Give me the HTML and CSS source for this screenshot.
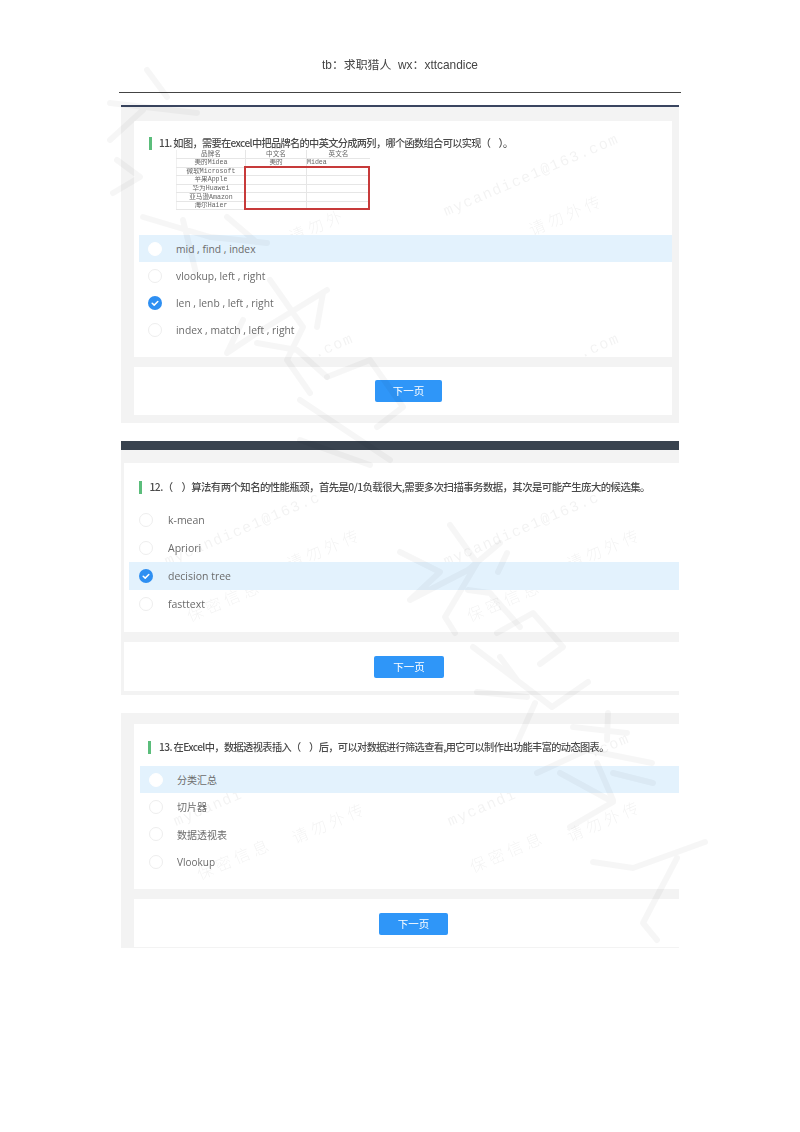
FILE: index.html
```html
<!DOCTYPE html>
<html lang="zh-CN">
<head>
<meta charset="utf-8">
<title>tb：求职猎人 wx：xttcandice</title>
<link rel="stylesheet" href="styles.css">
</head>
<body>
<div class="page">
  <header class="doc-head">
    <p class="doc-title">tb：求职猎人&nbsp; wx：xttcandice</p>
    <div class="doc-rule"></div>
  </header>

  <section class="card card-a">
    <div class="card-bar"></div>
    <div class="card-body">
      <div class="panel quiz">
        <h2 class="q-title"><span class="q-mark"></span>11. 如图，需要在excel中把品牌名的中英文分成两列，哪个函数组合可以实现（&nbsp; &nbsp; &nbsp;）。</h2>
        <div class="sheet">
          <table class="sheet-table">
            <tr><td>品牌名</td><td>中文名</td><td>英文名</td></tr>
            <tr><td>美的Midea</td><td>美的</td><td class="left">Midea</td></tr>
            <tr><td>微软Microsoft</td><td></td><td></td></tr>
            <tr><td>苹果Apple</td><td></td><td></td></tr>
            <tr><td>华为Huawei</td><td></td><td></td></tr>
            <tr><td>亚马逊Amazon</td><td></td><td></td></tr>
            <tr><td>海尔Haier</td><td></td><td></td></tr>
          </table>
          <div class="sheet-mark"></div>
        </div>
        <ul class="options">
          <li class="opt hl"><span class="radio"></span>mid , find , index</li>
          <li class="opt"><span class="radio"></span>vlookup, left , right</li>
          <li class="opt"><span class="radio on"><svg viewBox="0 0 14 14"><path d="M4.2 7.2l2 1.9 3.6-3.6"/></svg></span>len , lenb , left , right</li>
          <li class="opt"><span class="radio"></span>index , match , left , right</li>
        </ul>
      </div>
      <div class="panel actions"><button class="next">下一页</button></div>
    </div>
  </section>

  <section class="card card-b">
    <div class="card-bar"></div>
    <div class="card-body">
      <div class="panel quiz">
        <h2 class="q-title"><span class="q-mark"></span>12.（&nbsp; &nbsp; &nbsp;）算法有两个知名的性能瓶颈，首先是0/1负载很大,需要多次扫描事务数据，其次是可能产生庞大的候选集。</h2>
        <ul class="options">
          <li class="opt"><span class="radio"></span>k-mean</li>
          <li class="opt"><span class="radio"></span>Apriori</li>
          <li class="opt hl"><span class="radio on"><svg viewBox="0 0 14 14"><path d="M4.2 7.2l2 1.9 3.6-3.6"/></svg></span>decision tree</li>
          <li class="opt"><span class="radio"></span>fasttext</li>
        </ul>
      </div>
      <div class="panel actions"><button class="next">下一页</button></div>
    </div>
  </section>

  <section class="card card-c">
    <div class="card-body">
      <div class="panel quiz">
        <h2 class="q-title"><span class="q-mark"></span>13. 在Excel中，数据透视表插入（&nbsp; &nbsp; &nbsp;）后，可以对数据进行筛选查看,用它可以制作出功能丰富的动态图表。</h2>
        <ul class="options">
          <li class="opt hl"><span class="radio"></span>分类汇总</li>
          <li class="opt"><span class="radio"></span>切片器</li>
          <li class="opt"><span class="radio"></span>数据透视表</li>
          <li class="opt"><span class="radio"></span>Vlookup</li>
        </ul>
      </div>
      <div class="panel actions"><button class="next">下一页</button></div>
    </div>
  </section>

  <svg class="wm wm-text" viewBox="0 0 800 1132">
    <text class="wm-en" transform="translate(446 216) rotate(-23)">mycandice1@163.com</text>
    <text class="wm-cn" transform="translate(292 243) rotate(-23)">请勿外</text>
    <text class="wm-cn" transform="translate(532 236) rotate(-23)">请勿外传</text>
    <text class="wm-en" transform="translate(316 358) rotate(-23)">.com</text>
    <text class="wm-en" transform="translate(582 358) rotate(-23)">.com</text>
    <text class="wm-en" transform="translate(167 566) rotate(-23)">mycandice1@163.c</text>
    <text class="wm-en" transform="translate(446 566) rotate(-23)">mycandice1@163.c</text>
    <text class="wm-cn" transform="translate(290 570) rotate(-23)">请勿外传</text>
    <text class="wm-cn" transform="translate(570 570) rotate(-23)">请勿外传</text>
    <text class="wm-cn" transform="translate(190 622) rotate(-23)">保密信息</text>
    <text class="wm-cn" transform="translate(470 622) rotate(-23)">保密信息</text>
    <text class="wm-en" transform="translate(176 826) rotate(-23)">mycandi</text>
    <text class="wm-en" transform="translate(450 826) rotate(-23)">mycandi</text>
    <text class="wm-en" transform="translate(592 758) rotate(-23)">.com</text>
    <text class="wm-cn" transform="translate(295 844) rotate(-23)">请勿外传</text>
    <text class="wm-cn" transform="translate(570 842) rotate(-23)">请勿外传</text>
    <text class="wm-cn" transform="translate(200 880) rotate(-23)">保密信息</text>
    <text class="wm-cn" transform="translate(473 873) rotate(-23)">保密信息</text>
  </svg>

  <svg class="wm wm-brush" viewBox="0 0 800 1132">
    <path d="M147 70l20 27M110 103l87 10M110 140l33-30M117 160l23 17-27 16"/>
    <path d="M143 217l67 20 57 6M183 220l13 53M227 217l27 23M270 280l33 47-16 33 23 33M327 290l-70 43-30 20 16-33M323 293l-6 34M257 343l40 7 30 27"/>
    <path d="M327 377l43-17 33 47-26 20M300 400l90 60M300 440l70 25"/>
    <path d="M450 525l27 38-32 54 10 16M400 552l40 20-30 28 58-30 32-27M507 553l-9 19M468 590l22 3 30 34"/>
    <path d="M497 633l36-20 30 34-23 17M473 647l79 60 36-25M477 692l50 5M500 657l17 23M535 703l-18 40"/>
    <path d="M608 713l-1 27M573 727l54 6M537 773l50-23 65 13M560 773l53 29-43 25M597 763l16 37M613 773l40 10"/>
    <path d="M593 862l40 6 72-26M677 858l-34 65 14 17"/>
  </svg>
</div>
</body>
</html>
```
FILE: styles.css
```css
* { box-sizing: border-box; }
html, body { margin: 0; background: #fff; }
body { font-family: "Noto Sans CJK SC", "Noto Sans", sans-serif; color: #555; }

.page {
  position: relative;
  width: 800px;
  height: 1132px;
  padding: 0 121px;
  overflow: hidden;
  filter: blur(0.45px);
}

.doc-head { margin: 0 -2px; height: 105px; padding-top: 57px; }
.doc-title { margin: 0; height: 16px; font-family: "Liberation Sans", "Noto Sans CJK SC", sans-serif; font-size: 11.9px; line-height: 16px; text-align: center; color: #444; }
.doc-rule { margin-top: 18.5px; height: 1.5px; background: #444; }

.card { background: #f3f3f3; }
.card-bar { background: #39434f; }
.card-body { display: flex; flex-direction: column; gap: 10px; }
.panel { background: #fff; }
.quiz { display: flow-root; }

.card-a { height: 318px; }
.card-a .card-bar { height: 2px; background: #3a4560; }
.card-a .card-body { padding: 14px 7px 9px 13px; }
.card-a .quiz { height: 236px; padding-top: 15px; }
.card-a .q-title { margin-left: 15px; font-size: 10.2px; letter-spacing: -0.65px; }
.card-a .options { margin: 25px 0 0 5px; }
.card-a .opt { height: 27px; padding-left: 9px; gap: 14px; font-size: 10.3px; }
.card-a .actions { height: 48px; padding-top: 13px; }
.card-a .next { width: 67px; margin-left: 241px; }

.card-b { margin-top: 18px; height: 254px; }
.card-b .card-bar { height: 9px; }
.card-b .card-body { padding: 13px 0 4px 3px; }
.card-b .quiz { height: 169px; padding-top: 17px; }
.card-b .q-title { margin-left: 14.5px; font-size: 10.4px; letter-spacing: -0.57px; }
.card-b .q-mark { margin-right: 8px; }
.card-b .options { margin: 11.5px 0 0 4.5px; }
.card-b .opt { height: 28px; padding-left: 10.5px; gap: 15px; }
.card-b .actions { height: 49px; padding-top: 14px; }
.card-b .next { width: 70px; margin-left: 250px; }

.card-c { margin-top: 18px; height: 235px; }
.card-c .card-body { padding: 11px 0 1px 13px; }
.card-c .quiz { height: 165px; padding-top: 16px; }
.card-c .q-title { margin-left: 14px; font-size: 10.2px; letter-spacing: -0.6px; }
.card-c .q-mark { margin-right: 8px; }
.card-c .options { margin: 12px 0 0 5.5px; }
.card-c .opt { height: 27.3px; padding-left: 9.5px; gap: 14px; font-size: 10px; }
.card-c .actions { height: 48px; padding-top: 14px; }
.card-c .next { width: 69px; margin-left: 245px; }

.q-title {
  display: flex;
  align-items: center;
  margin: 0;
  height: 14px;
  font-weight: 500;
  line-height: 14px;
  white-space: pre;
  color: #4a4a4a;
}
.q-mark { flex: none; width: 3px; height: 13px; margin-right: 7px; background: #5bbd7b; }

.sheet { position: relative; width: 194px; height: 60px; margin-left: 42px; overflow: hidden; }
.sheet-table {
  width: 194px;
  height: 60px;
  border-collapse: collapse;
  table-layout: fixed;
  font-family: "Liberation Mono", "Noto Sans CJK SC", monospace;
  font-size: 6.6px;
  color: #666;
}
.sheet-table tr { height: 8.57px; }
.sheet-table td { padding: 1px 0 0; line-height: 6px; text-align: center; border: 1px solid #e6e6e6; overflow: hidden; white-space: nowrap; }
.sheet-table tr:first-child td { border-top: 0; }
.sheet-table td:first-child { width: 69px; border-left-color: #f0f0f0; }
.sheet-table td:nth-child(2) { width: 61px; }
.sheet-table td.left { text-align: left; }
.sheet-table td:nth-child(3) { border-right: 0; }
.sheet-mark { position: absolute; left: 68px; top: 16px; width: 126px; height: 44px; border: 2px solid #c73a3a; }

.options { margin: 0; padding: 0; list-style: none; }
.opt {
  display: flex;
  align-items: center;
  font-family: "Open Sans", "Noto Sans CJK SC", sans-serif;
  font-size: 10.5px;
  color: #6b6b6b;
  white-space: pre;
}
.opt.hl { position: relative; z-index: 2; background: #e3f2fd; }
.radio { flex: none; width: 14px; height: 14px; border: 1px solid #eee; border-radius: 50%; background: #fff; }
.hl .radio { border-color: #fff; }
.radio.on { border: 0; background: #2e8ff2; }
.radio svg { display: block; width: 14px; height: 14px; fill: none; stroke: #fff; stroke-width: 1.5; stroke-linecap: round; stroke-linejoin: round; }

.next {
  display: block;
  height: 22px;
  padding: 0;
  border: 0;
  border-radius: 2px;
  background: #2f96f8;
  color: #fff;
  font-family: inherit;
  font-size: 10.5px;
  line-height: 22px;
}

.wm { position: absolute; left: 0; top: 0; width: 800px; height: 1132px; pointer-events: none; }
.wm-text { z-index: 1; }
.wm-brush { z-index: 3; fill: none; stroke: #000; stroke-opacity: 0.035; stroke-width: 6; stroke-linecap: round; stroke-linejoin: round; }
.wm-en { font-family: "Liberation Mono", monospace; font-size: 15px; letter-spacing: 1.5px; fill: #000; fill-opacity: 0.05; }
.wm-cn { font-family: "Noto Sans CJK SC", sans-serif; font-size: 16px; font-weight: 300; letter-spacing: 4px; fill: #000; fill-opacity: 0.05; }
```
